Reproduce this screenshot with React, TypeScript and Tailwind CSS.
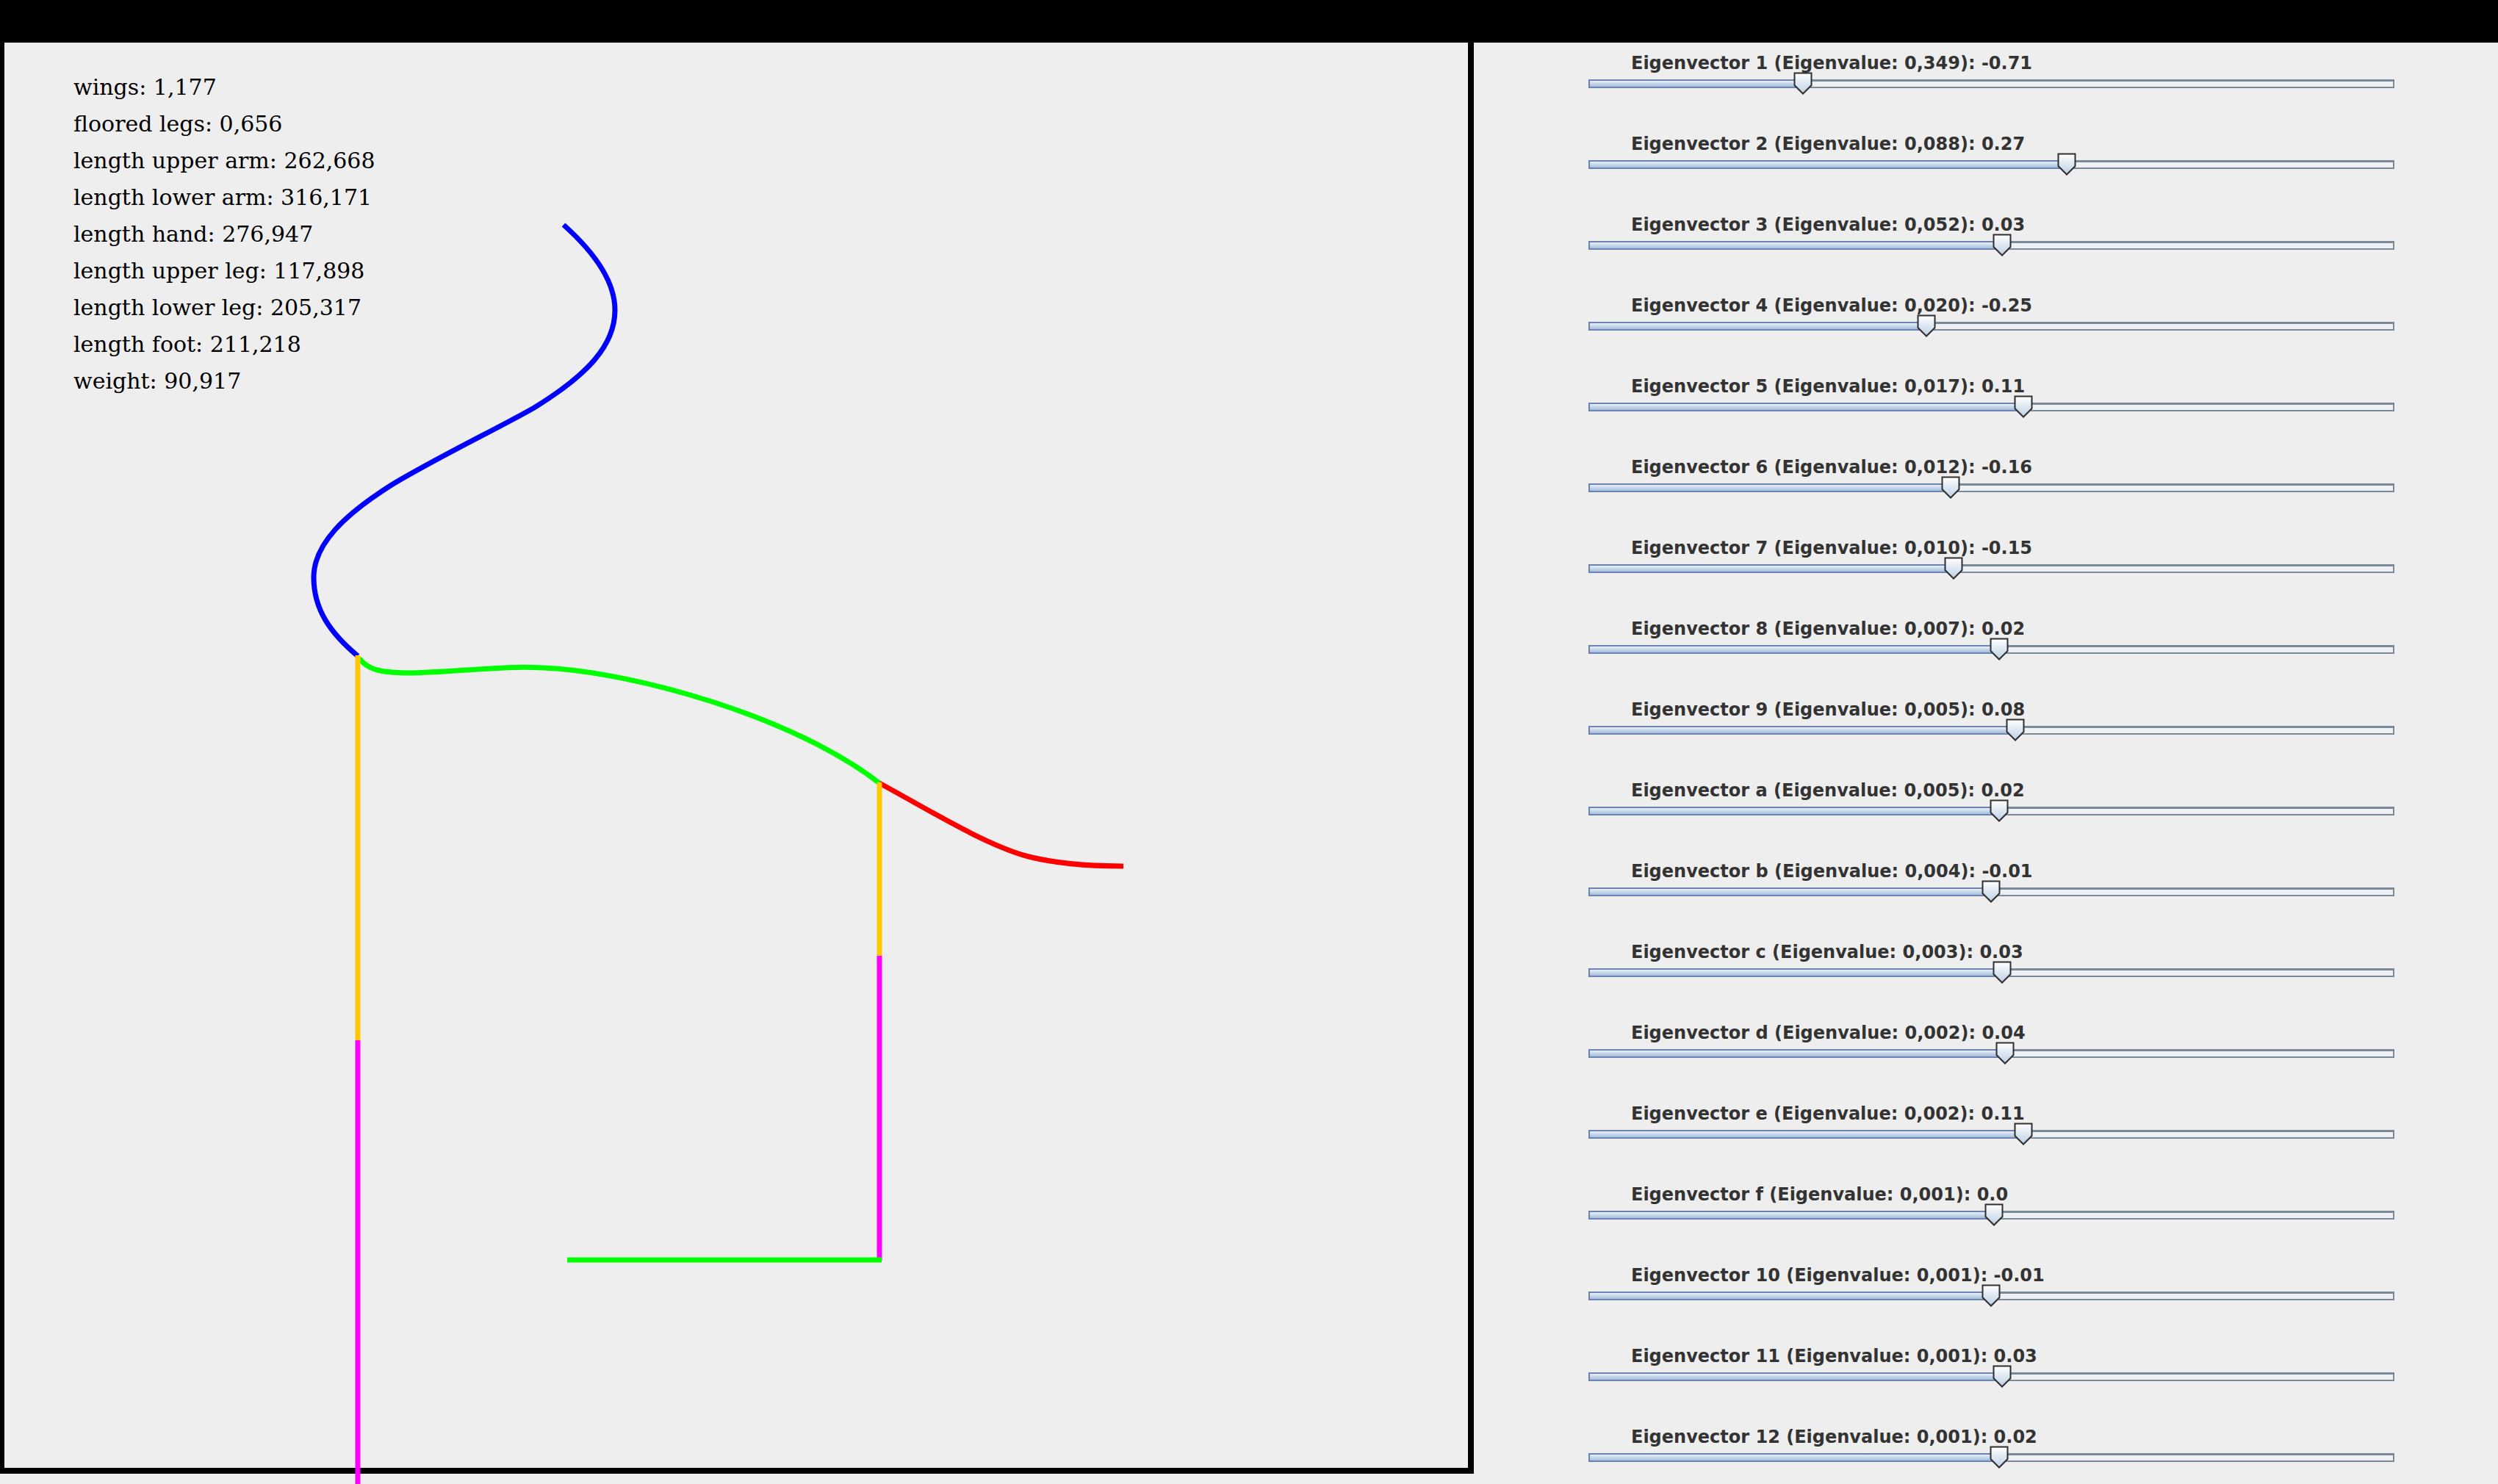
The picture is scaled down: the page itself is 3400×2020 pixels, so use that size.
const stats = [
  "wings: 1,177",
  "floored legs: 0,656",
  "length upper arm: 262,668",
  "length lower arm: 316,171",
  "length hand: 276,947",
  "length upper leg: 117,898",
  "length lower leg: 205,317",
  "length foot: 211,218",
  "weight: 90,917",
];

const vectors: [string, string, string][] = [
  ["1", "0,349", "-0.71"],
  ["2", "0,088", "0.27"],
  ["3", "0,052", "0.03"],
  ["4", "0,020", "-0.25"],
  ["5", "0,017", "0.11"],
  ["6", "0,012", "-0.16"],
  ["7", "0,010", "-0.15"],
  ["8", "0,007", "0.02"],
  ["9", "0,005", "0.08"],
  ["a", "0,005", "0.02"],
  ["b", "0,004", "-0.01"],
  ["c", "0,003", "0.03"],
  ["d", "0,002", "0.04"],
  ["e", "0,002", "0.11"],
  ["f", "0,001", "0.0"],
  ["10", "0,001", "-0.01"],
  ["11", "0,001", "0.03"],
  ["12", "0,001", "0.02"],
];

function Thumb() {
  return (
    <svg width="26" height="31" viewBox="0 0 26 31">
      <defs>
        <linearGradient id="thumbFill" x1="0" y1="0" x2="0" y2="1">
          <stop offset="0" stopColor="#ffffff" />
          <stop offset="1" stopColor="#bcd0e6" />
        </linearGradient>
      </defs>
      <polygon
        points="1.5,1.5 24.5,1.5 24.5,18 13,29.5 1.5,18"
        fill="url(#thumbFill)"
        stroke="#2f2f2f"
        strokeWidth="2"
        strokeLinejoin="miter"
      />
    </svg>
  );
}

function Slider({ name, eigen, value }: { name: string; eigen: string; value: string }) {
  const pos = 552 + parseFloat(value) * 366.5;
  return (
    <div className="h-[110px] flex flex-col shrink-0">
      <div className="mt-[16px] pl-[214px] h-[25px] leading-[25px] text-[24px] font-bold text-[#333333] whitespace-nowrap font-['DejaVu_Sans',sans-serif]">
        Eigenvector {name} (Eigenvalue: {eigen}): {value}
      </div>
      <div className="relative mt-[9px] ml-[156px] w-[1097px] h-[12px] flex">
        <div
          className="h-full border-2 border-r-0 border-[#6d84b3] bg-linear-to-b from-[#e8eff8] to-[#a6bedc]"
          style={{ width: pos }}
        />
        <div className="h-full flex-1 border-2 border-t-[3px] border-l-0 border-[#7a8a99] bg-[#eef0f3]" />
        <div className="absolute top-[-10px]" style={{ left: pos - 13 }}>
          <Thumb />
        </div>
      </div>
    </div>
  );
}

function Skeleton() {
  return (
    <svg
      className="absolute left-0 top-0 pointer-events-none"
      width="3400"
      height="2020"
      viewBox="0 0 3400 2020"
      fill="none"
      strokeWidth="7"
    >
      {/* arm */}
      <path
        d="M767,306 C805,340 837,380 837,422 C837,470 800,510 727,555 C680,582 600,620 533,660 C470,700 427,740 427,786 C427,830 450,862 487,893"
        stroke="#0000ff"
      />
      <path
        d="M489,896 C500,912 520,916 560,916 C640,914 680,906 740,909 C860,914 1080,975 1197,1066"
        stroke="#00ff00"
      />
      <path d="M1197,1066 C1260,1100 1340,1150 1400,1166 C1440,1176 1490,1179 1529,1179" stroke="#ff0000" />
      {/* legs */}
      <line x1="487" y1="892" x2="487" y2="1416" stroke="#ffc800" />
      <line x1="487" y1="1416" x2="487" y2="2030" stroke="#ff00ff" />
      <line x1="1197" y1="1065" x2="1197" y2="1301" stroke="#ffc800" />
      <line x1="1197" y1="1301" x2="1197" y2="1716" stroke="#ff00ff" />
      <line x1="772" y1="1715" x2="1200" y2="1715" stroke="#00ff00" />
    </svg>
  );
}

export default function App() {
  return (
    <div className="relative w-[3400px] h-[2020px] overflow-hidden bg-[#eeeeee] flex flex-col">
      <div className="h-[58px] bg-black shrink-0" />
      <div className="flex flex-1 min-h-0">
        {/* drawing panel */}
        <div className="w-[2006px] h-[1948px] shrink-0 border-l-[6px] border-r-[8px] border-b-[8px] border-black pt-[36px] pl-[94px]">
          {stats.map((s) => (
            <div key={s} className="h-[50px] leading-[50px] text-[30px] text-black whitespace-nowrap font-['DejaVu_Serif',serif]">
              {s}
            </div>
          ))}
        </div>

        {/* eigenvector sliders */}
        <div className="flex-1 flex flex-col">
          {vectors.map(([n, e, v]) => (
            <Slider key={n} name={n} eigen={e} value={v} />
          ))}
        </div>
      </div>
      <Skeleton />
    </div>
  );
}
